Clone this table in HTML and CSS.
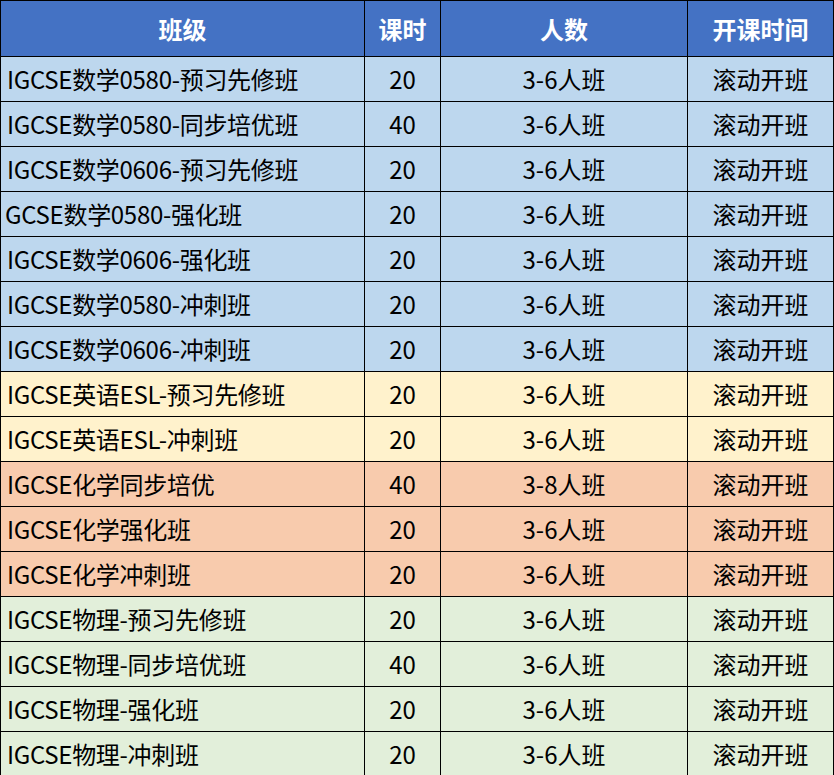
FILE: index.html
```html
<!DOCTYPE html>
<html lang="zh-CN">
<head>
<meta charset="utf-8">
<link rel="stylesheet" href="styles.css">
</head>
<body>
<table class="schedule">
  <colgroup>
    <col class="c-name"><col class="c-hours"><col class="c-size"><col class="c-start">
  </colgroup>
  <thead>
    <tr><th>班级</th><th>课时</th><th>人数</th><th>开课时间</th></tr>
  </thead>
  <tbody>
    <tr class="math"><td class="name">IGCSE数学0580-预习先修班</td><td>20</td><td>3-6人班</td><td>滚动开班</td></tr>
    <tr class="math"><td class="name">IGCSE数学0580-同步培优班</td><td>40</td><td>3-6人班</td><td>滚动开班</td></tr>
    <tr class="math"><td class="name">IGCSE数学0606-预习先修班</td><td>20</td><td>3-6人班</td><td>滚动开班</td></tr>
    <tr class="math"><td class="name tight">GCSE数学0580-强化班</td><td>20</td><td>3-6人班</td><td>滚动开班</td></tr>
    <tr class="math"><td class="name">IGCSE数学0606-强化班</td><td>20</td><td>3-6人班</td><td>滚动开班</td></tr>
    <tr class="math"><td class="name">IGCSE数学0580-冲刺班</td><td>20</td><td>3-6人班</td><td>滚动开班</td></tr>
    <tr class="math"><td class="name">IGCSE数学0606-冲刺班</td><td>20</td><td>3-6人班</td><td>滚动开班</td></tr>
    <tr class="eng"><td class="name">IGCSE英语ESL-预习先修班</td><td>20</td><td>3-6人班</td><td>滚动开班</td></tr>
    <tr class="eng"><td class="name">IGCSE英语ESL-冲刺班</td><td>20</td><td>3-6人班</td><td>滚动开班</td></tr>
    <tr class="chem"><td class="name">IGCSE化学同步培优</td><td>40</td><td>3-8人班</td><td>滚动开班</td></tr>
    <tr class="chem"><td class="name">IGCSE化学强化班</td><td>20</td><td>3-6人班</td><td>滚动开班</td></tr>
    <tr class="chem"><td class="name">IGCSE化学冲刺班</td><td>20</td><td>3-6人班</td><td>滚动开班</td></tr>
    <tr class="phys"><td class="name">IGCSE物理-预习先修班</td><td>20</td><td>3-6人班</td><td>滚动开班</td></tr>
    <tr class="phys"><td class="name">IGCSE物理-同步培优班</td><td>40</td><td>3-6人班</td><td>滚动开班</td></tr>
    <tr class="phys"><td class="name">IGCSE物理-强化班</td><td>20</td><td>3-6人班</td><td>滚动开班</td></tr>
    <tr class="phys"><td class="name">IGCSE物理-冲刺班</td><td>20</td><td>3-6人班</td><td>滚动开班</td></tr>
  </tbody>
</table>
</body>
</html>
```
FILE: styles.css
```css
html, body {
  margin: 0;
  padding: 0;
  background: #ffffff;
}
.schedule {
  border-collapse: collapse;
  table-layout: fixed;
  width: 833px;
  font-family: "Noto Sans CJK SC", "Noto Sans", sans-serif;
  font-size: 24px;
  color: #000;
}
.c-name { width: 364px; }
.c-hours { width: 76px; }
.c-size { width: 247px; }
.c-start { width: 146px; }
.schedule th,
.schedule td {
  border: 1px solid #000;
  padding: 0;
  text-align: center;
  vertical-align: middle;
  white-space: nowrap;
  overflow: hidden;
  line-height: 1;
}
.schedule thead tr { height: 56px; }
.schedule th {
  background: #4472c4;
  color: #fff;
  font-weight: bold;
}
.schedule tbody tr { height: 45px; }
.schedule td.name {
  text-align: left;
  padding-left: 6px;
  letter-spacing: -0.3px;
}
.schedule td.name.tight { padding-left: 4px; }
.math td { background: #bdd7ee; }
.eng td { background: #fff2cc; }
.chem td { background: #f8cbad; }
.phys td { background: #e2efda; }
```
